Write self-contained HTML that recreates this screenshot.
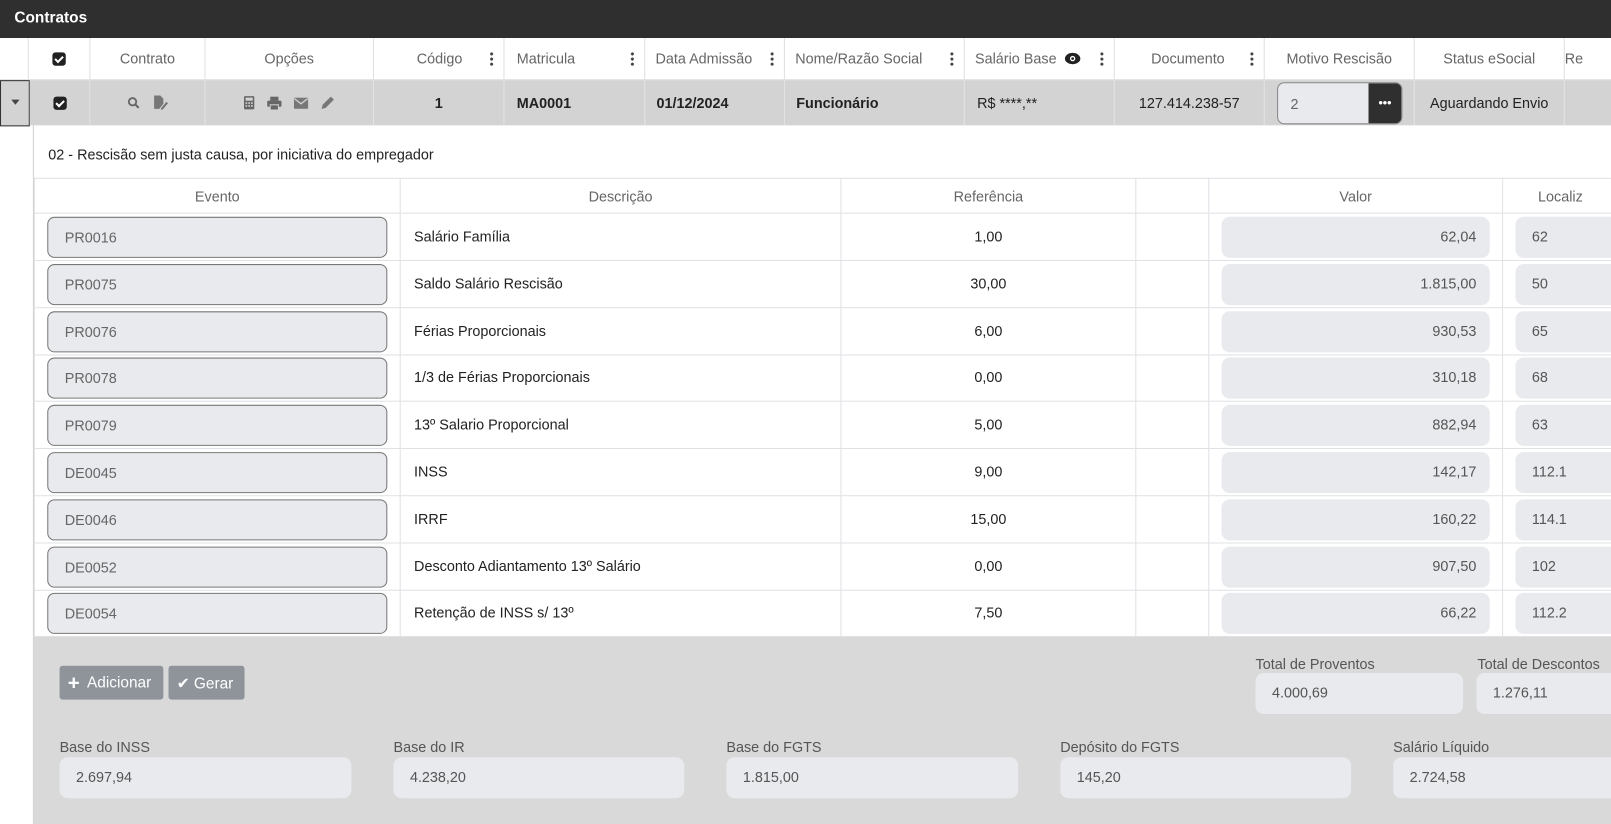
<!DOCTYPE html>
<html><head><meta charset="utf-8"><style>
*{box-sizing:border-box;margin:0;padding:0}
html,body{width:1611px;height:824px;overflow:hidden;background:#fff}
body{font-family:"Liberation Sans",sans-serif;font-size:14px;color:#222;position:relative}
#wrap{position:absolute;left:0;top:0;width:1568px;height:802px;transform:scale(1.02742);transform-origin:0 0}
.a{position:absolute}
.top{left:0;top:0;width:1568px;height:37px;background:#2f2f2f;color:#fff;font-weight:bold;font-size:15px;padding:9px 14px}
.hd{top:37px;height:41px;border-bottom:1px solid #e0e0e0;border-right:1px solid #e0e0e0;color:#666;display:flex;align-items:center;justify-content:center;font-size:14px}
.rw{top:78px;height:44px;background:#d3d3d3;border-right:1px solid #e4e4e4;display:flex;align-items:center;justify-content:center;color:#222}
.dots{position:absolute;right:10px;top:13px;width:3px;height:14px;background:radial-gradient(circle,#444 1.4px,transparent 1.6px) 0 0/3px 5px}
.cb{width:13px;height:13px;background:#222;border-radius:3px;position:relative}
.cb:after{content:"";position:absolute;left:4px;top:2px;width:3px;height:6px;border:solid #fff;border-width:0 2px 2px 0;transform:rotate(45deg)}
.th{top:173px;height:35px;border:1px solid #dfe1e5;border-left:none;color:#666;display:flex;align-items:center;justify-content:center}
.td{height:46px;border-bottom:1px solid #dfe1e5;border-right:1px solid #dfe1e5}
.ev{position:absolute;left:12px;right:12px;top:3px;height:40px;border:1px solid #777;border-radius:7px;background:#e8eaed;color:#666;padding:11px 16px}
.in{position:absolute;background:#e8eaed;border-radius:8px;color:#555;padding:11px 16px}
.lb{color:#555;font-size:14px}
.btn{background:#8f949a;color:#fff;border-radius:3px;height:33px;top:648px;font-size:15px;display:flex;align-items:center;padding:0 8px}
</style></head><body><div id="wrap">
<div class="a top">Contratos</div>
<div class="a hd" style="left:0;width:28px"></div>
<div class="a hd" style="left:28px;width:60px"><div class="cb"></div></div>
<div class="a hd" style="left:88px;width:112px">Contrato</div>
<div class="a hd" style="left:200px;width:164px">Opções</div>
<div class="a hd" style="left:364px;width:127px;justify-content:flex-end;padding-right:40px">Código<span class="dots"></span></div>
<div class="a hd" style="left:491px;width:137px;justify-content:flex-start;padding-left:12px">Matricula<span class="dots"></span></div>
<div class="a hd" style="left:628px;width:136px;justify-content:flex-start;padding-left:10px">Data Admissão<span class="dots"></span></div>
<div class="a hd" style="left:764px;width:175px;justify-content:flex-start;padding-left:10px">Nome/Razão Social<span class="dots"></span></div>
<div class="a hd" style="left:939px;width:146px;justify-content:flex-start;padding-left:10px">Salário Base <svg width="16" height="14" viewBox="0 0 16 14" style="margin-left:8px"><ellipse cx="8" cy="7" rx="7.5" ry="5.5" fill="#222"/><circle cx="8" cy="7" r="2.6" fill="#fff"/><circle cx="8" cy="7" r="1.3" fill="#222"/></svg><span class="dots"></span></div>
<div class="a hd" style="left:1085px;width:146px;justify-content:flex-end;padding-right:38px">Documento<span class="dots"></span></div>
<div class="a hd" style="left:1231px;width:146px">Motivo Rescisão</div>
<div class="a hd" style="left:1377px;width:146px">Status eSocial</div>
<div class="a hd" style="left:1523px;width:45px;justify-content:flex-start;padding-left:0;border-right:none">Re</div>

<div class="a" style="left:0;top:78px;width:29px;height:45px;border:1px solid #333;background:#d3d3d3"><div style="position:absolute;left:10px;top:18px;border:4px solid transparent;border-top:5px solid #444"></div></div>
<div class="a rw" style="left:29px;width:59px"><div class="cb"></div></div>
<div class="a rw" style="left:88px;width:112px;gap:12px"><svg width="12" height="12" viewBox="0 0 12 12"><circle cx="5" cy="5" r="3.6" stroke="#666" stroke-width="1.8" fill="none"/><path d="M7.6 7.6 11 11" stroke="#666" stroke-width="2"/></svg><svg width="16" height="16" viewBox="0 0 16 16"><path d="M2 1h6l3 3v5l-4 5H2z" fill="#777"/><path d="M9 13l5-6 1.5 1.5-5 6-2 .5z" fill="#777"/></svg></div>
<div class="a rw" style="left:200px;width:164px;gap:12px">
<svg width="11" height="14" viewBox="0 0 11 14"><rect x="0.5" y="0.5" width="10" height="13" rx="1" fill="#666"/><rect x="2" y="2" width="7" height="3" fill="#d3d3d3"/><g fill="#d3d3d3"><rect x="2" y="6.5" width="1.6" height="1.6"/><rect x="4.7" y="6.5" width="1.6" height="1.6"/><rect x="7.4" y="6.5" width="1.6" height="1.6"/><rect x="2" y="9.3" width="1.6" height="1.6"/><rect x="4.7" y="9.3" width="1.6" height="1.6"/><rect x="7.4" y="9.3" width="1.6" height="1.6"/></g></svg>
<svg width="14" height="13" viewBox="0 0 14 13"><rect x="3" y="0" width="8" height="4" fill="#666"/><rect x="0" y="4" width="14" height="6" rx="1.5" fill="#666"/><rect x="3" y="8" width="8" height="5" fill="#666" stroke="#d3d3d3" stroke-width="1"/></svg>
<svg width="14" height="11" viewBox="0 0 14 11"><rect width="14" height="11" rx="1" fill="#777"/><path d="M0.5 1 7 6 13.5 1" stroke="#d3d3d3" stroke-width="1.3" fill="none"/></svg>
<svg width="14" height="14" viewBox="0 0 14 14"><path d="M1 13l1-4 8-8 3 3-8 8z" fill="#777"/></svg></div>
<div class="a rw" style="left:364px;width:127px;font-weight:bold">1</div>
<div class="a rw" style="left:491px;width:137px;justify-content:flex-start;padding-left:12px;font-weight:bold">MA0001</div>
<div class="a rw" style="left:628px;width:136px;justify-content:flex-start;padding-left:11px;font-weight:bold">01/12/2024</div>
<div class="a rw" style="left:764px;width:175px;justify-content:flex-start;padding-left:11px;font-weight:bold">Funcionário</div>
<div class="a rw" style="left:939px;width:146px;justify-content:flex-start;padding-left:12px">R$ ****,**</div>
<div class="a rw" style="left:1085px;width:146px">127.414.238-57</div>
<div class="a rw" style="left:1231px;width:146px"><div style="position:absolute;left:12px;top:2px;width:122px;height:41px;border:1px solid #888;border-radius:7px;background:#e8eaed;color:#666;padding:12px 12px;overflow:hidden">2<div style="position:absolute;right:0;top:0;width:32px;height:41px;background:#2f2f2f;color:#fff;font-weight:bold;text-align:center;line-height:39px;font-size:12px">•••</div></div></div>
<div class="a rw" style="left:1377px;width:146px">Aguardando Envio</div>
<div class="a rw" style="left:1523px;width:45px;border-right:none"></div>

<div class="a" style="left:32px;top:122px;width:1px;height:702px;background:#d0d0d0"></div>
<div class="a" style="left:47px;top:142px;color:#222">02 - Rescisão sem justa causa, por iniciativa do empregador</div>

<div class="a th" style="left:33px;width:357px;border-left:1px solid #dfe1e5">Evento</div>
<div class="a th" style="left:390px;width:429px">Descrição</div>
<div class="a th" style="left:819px;width:287px">Referência</div>
<div class="a th" style="left:1106px;width:71px"></div>
<div class="a th" style="left:1177px;width:286px">Valor</div>
<div class="a th" style="left:1463px;width:105px;justify-content:flex-start;padding-left:34px;border-right:none">Localiz</div>

<div id="rows"></div>
<script>
var d=[["PR0016","Salário Família","1,00","62,04","62"],["PR0075","Saldo Salário Rescisão","30,00","1.815,00","50"],["PR0076","Férias Proporcionais","6,00","930,53","65"],["PR0078","1/3 de Férias Proporcionais","0,00","310,18","68"],["PR0079","13º Salario Proporcional","5,00","882,94","63"],["DE0045","INSS","9,00","142,17","112.1"],["DE0046","IRRF","15,00","160,22","114.1"],["DE0052","Desconto Adiantamento 13º Salário","0,00","907,50","102"],["DE0054","Retenção de INSS s/ 13º","7,50","66,22","112.2"]];
var h="";
d.forEach(function(r,i){var t=208+i*45.8;
h+='<div class="a td" style="left:33px;top:'+t+'px;width:357px;border-left:1px solid #dfe1e5"><div class="ev">'+r[0]+'</div></div>';
h+='<div class="a td" style="left:390px;top:'+t+'px;width:429px;padding:14px 13px">'+r[1]+'</div>';
h+='<div class="a td" style="left:819px;top:'+t+'px;width:287px;padding:14px 0;text-align:center">'+r[2]+'</div>';
h+='<div class="a td" style="left:1106px;top:'+t+'px;width:71px"></div>';
h+='<div class="a td" style="left:1177px;top:'+t+'px;width:286px"><div class="in" style="left:12px;right:12px;top:3px;height:40px;text-align:right;padding-right:13px">'+r[3]+'</div></div>';
h+='<div class="a td" style="left:1463px;top:'+t+'px;width:105px;border-right:none"><div class="in" style="left:12px;right:0;top:3px;height:40px;border-radius:8px 0 0 8px">'+r[4]+'</div></div>';});
document.getElementById("rows").innerHTML=h;
</script>

<div class="a" style="left:33px;top:620px;width:1535px;height:204px;background:#d9d9d9"></div>
<div class="a btn" style="left:58px;width:101px"><span style="font-size:20px;font-weight:bold;margin-right:7px;line-height:1">+</span>Adicionar</div>
<div class="a btn" style="left:164px;width:74px">✔&nbsp;Gerar</div>

<div class="a lb" style="left:1222px;top:638px">Total de Proventos</div>
<div class="in" style="left:1222px;top:655px;width:202px;height:40px">4.000,69</div>
<div class="a lb" style="left:1438px;top:638px">Total de Descontos</div>
<div class="in" style="left:1437px;top:655px;width:131px;height:40px;border-radius:8px 0 0 8px">1.276,11</div>

<div class="a lb" style="left:58px;top:719px">Base do INSS</div>
<div class="in" style="left:58px;top:737px;width:284px;height:40px">2.697,94</div>
<div class="a lb" style="left:383px;top:719px">Base do IR</div>
<div class="in" style="left:383px;top:737px;width:283px;height:40px">4.238,20</div>
<div class="a lb" style="left:707px;top:719px">Base do FGTS</div>
<div class="in" style="left:707px;top:737px;width:284px;height:40px">1.815,00</div>
<div class="a lb" style="left:1032px;top:719px">Depósito do FGTS</div>
<div class="in" style="left:1032px;top:737px;width:283px;height:40px">145,20</div>
<div class="a lb" style="left:1356px;top:719px">Salário Líquido</div>
<div class="in" style="left:1356px;top:737px;width:212px;height:40px;border-radius:8px 0 0 8px">2.724,58</div>
</div></body></html>
